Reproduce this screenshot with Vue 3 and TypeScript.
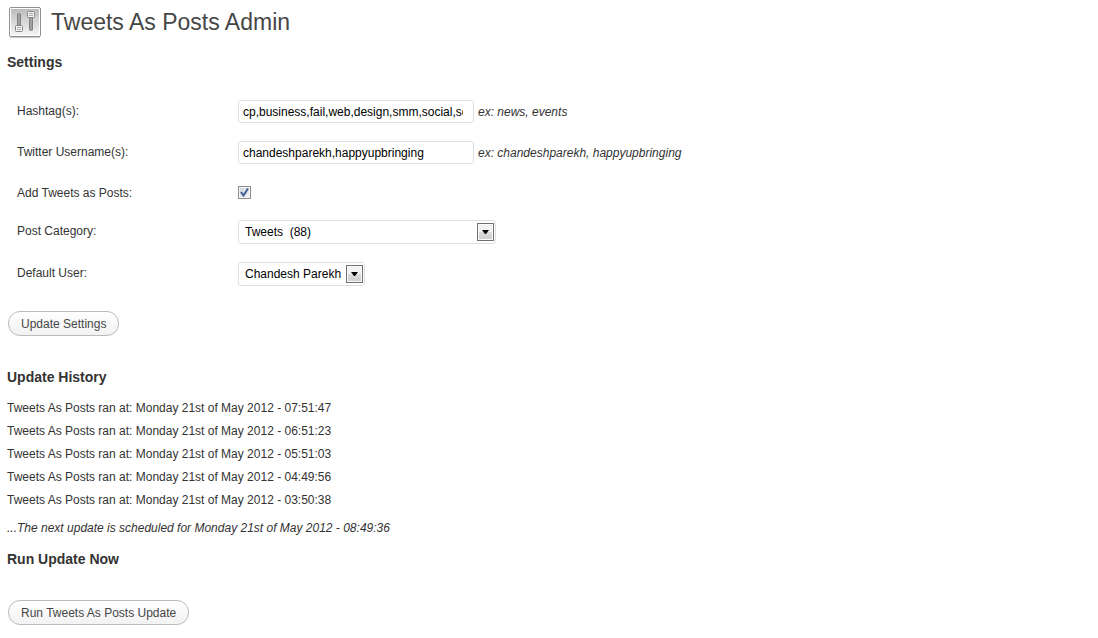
<script setup lang="ts">
import { ref } from 'vue'

const hashtags = ref('cp,business,fail,web,design,smm,social,seo,marketing')
const usernames = ref('chandeshparekh,happyupbringing')
const addAsPosts = ref(true)
const category = ref('tweets')
const defaultUser = ref('chandesh')

const runs: string[] = ['07:51:47', '06:51:23', '05:51:03', '04:49:56', '03:50:38']
</script>

<template>
  <main class="page">
    <header class="title">
      <svg class="title-icon" width="32" height="32" viewBox="0 0 32 32" aria-hidden="true">
        <defs>
          <linearGradient id="panel" x1="0" y1="0" x2="0" y2="1">
            <stop offset="0" stop-color="#bcbcbc" />
            <stop offset="1" stop-color="#f4f4f4" />
          </linearGradient>
        </defs>
        <rect x="0.5" y="1.5" width="31" height="29" rx="1.5" fill="#fff" stroke="#909090" />
        <rect x="2" y="3" width="28" height="26" fill="url(#panel)" />
        <path d="M1 31.5H31" stroke="#c8c8c8" />
        <rect x="8.5" y="7.5" width="3" height="14" rx="1" fill="#a0a0a0" stroke="#808080" />
        <rect x="20.5" y="10.5" width="3" height="14" rx="1" fill="#a0a0a0" stroke="#808080" />
        <rect x="6.5" y="19.5" width="7" height="6" rx="1" fill="#f5f5f5" stroke="#858585" />
        <path d="M8 21.5H12M8 23.5H12" stroke="#aaa" />
        <rect x="18.5" y="5.5" width="7" height="6" rx="1" fill="#f5f5f5" stroke="#858585" />
        <path d="M20 7.5H24M20 9.5H24" stroke="#aaa" />
      </svg>
      <h1>Tweets As Posts Admin</h1>
    </header>

    <form class="settings" @submit.prevent>
      <h2>Settings</h2>
      <div class="fields">
        <div class="row">
          <label for="hashtags">Hashtag(s):</label>
          <div class="control">
            <input id="hashtags" v-model="hashtags" class="text" type="text" />
            <em>ex: news, events</em>
          </div>
        </div>
        <div class="row">
          <label for="usernames">Twitter Username(s):</label>
          <div class="control">
            <input id="usernames" v-model="usernames" class="text" type="text" />
            <em>ex: chandeshparekh, happyupbringing</em>
          </div>
        </div>
        <div class="row tick-row">
          <label for="add-posts">Add Tweets as Posts:</label>
          <div class="control">
            <span class="tick">
              <input id="add-posts" v-model="addAsPosts" type="checkbox" />
              <svg v-if="addAsPosts" width="13" height="13" viewBox="0 0 13 13" aria-hidden="true">
                <path d="M3 6L5.5 9.5L10 2.5" fill="none" stroke="#43609c" stroke-width="2" />
              </svg>
            </span>
          </div>
        </div>
        <div class="row">
          <label for="category">Post Category:</label>
          <div class="control">
            <span class="picker wide">
              <select id="category" v-model="category">
                <option value="tweets">Tweets&nbsp;&nbsp;(88)</option>
              </select>
              <span class="arrow" aria-hidden="true">
                <svg width="7" height="4" viewBox="0 0 7 4"><path d="M0 0H7L4 4H3Z" /></svg>
              </span>
            </span>
          </div>
        </div>
        <div class="row">
          <label for="default-user">Default User:</label>
          <div class="control">
            <span class="picker">
              <select id="default-user" v-model="defaultUser">
                <option value="chandesh">Chandesh Parekh</option>
              </select>
              <span class="arrow" aria-hidden="true">
                <svg width="7" height="4" viewBox="0 0 7 4"><path d="M0 0H7L4 4H3Z" /></svg>
              </span>
            </span>
          </div>
        </div>
      </div>
      <button type="submit">Update Settings</button>
    </form>

    <section class="history">
      <h2>Update History</h2>
      <ul>
        <li v-for="time in runs" :key="time">
          Tweets As Posts ran at: Monday 21st of May 2012 - {{ time }}
        </li>
      </ul>
      <p>...The next update is scheduled for Monday 21st of May 2012 - 08:49:36</p>
    </section>

    <section class="run">
      <h2>Run Update Now</h2>
      <button type="button">Run Tweets As Posts Update</button>
    </section>
  </main>
</template>

<style>
body {
  margin: 0;
  background: #fff;
}
</style>

<style scoped>
.page {
  padding: 6px 7px 12px;
  font-family: "Liberation Sans", Arial, sans-serif;
  font-size: 12px;
  line-height: 16px;
  color: #333;
}
.title {
  display: flex;
  align-items: center;
  gap: 10px;
  padding-left: 2px;
}
.title-icon {
  flex: none;
}
h1 {
  margin: 0;
  font-size: 23px;
  font-weight: 400;
  line-height: 32px;
  color: #464646;
}
h2 {
  margin: 0;
  font-size: 14px;
  font-weight: 700;
  line-height: 20px;
}
.settings {
  padding-top: 14px;
}
.fields {
  padding: 19px 0 16px 10px;
}
.row {
  display: flex;
  align-items: center;
  padding: 9px 0;
}
.row > label {
  flex: none;
  width: 221px;
  padding-bottom: 2px;
}
.tick-row {
  padding: 10px 0;
}
.tick-row > label {
  padding: 2px 0 0;
}
.control {
  display: flex;
  align-items: center;
  gap: 4px;
}
.text {
  box-sizing: border-box;
  width: 236px;
  height: 23px;
  padding: 3px 10px 3px 4px;
  border: 1px solid #dfdfdf;
  border-radius: 3px;
  background: #fff;
  font: inherit;
  color: #000;
}
.tick {
  display: grid;
}
.tick > * {
  grid-area: 1 / 1;
}
.tick input {
  appearance: none;
  box-sizing: border-box;
  width: 13px;
  height: 13px;
  margin: 0;
  border: 1px solid #8e8f8f;
  background: linear-gradient(135deg, #cfd3da, #f6f6f6);
  box-shadow: inset 0 0 0 1px #f4f4f4;
}
.tick svg {
  pointer-events: none;
}
.picker {
  display: inline-grid;
  align-items: center;
}
.picker > * {
  grid-area: 1 / 1;
}
.picker select {
  appearance: none;
  box-sizing: border-box;
  width: 100%;
  height: 24px;
  padding: 2px 22px 2px 6px;
  border: 1px solid #dfdfdf;
  border-radius: 3px;
  background: #fff;
  font: inherit;
  color: #000;
}
.wide {
  width: 258px;
}
.arrow {
  display: grid;
  place-items: center;
  justify-self: end;
  box-sizing: border-box;
  width: 17px;
  height: 18px;
  margin-right: 2px;
  border: 1px solid #707070;
  background: linear-gradient(#f2f2f2 50%, #dcdcdc 50%, #cfcfcf);
  box-shadow: inset 0 0 0 1px #fafafa;
  pointer-events: none;
}
button {
  display: block;
  box-sizing: border-box;
  height: 25px;
  margin-left: 1px;
  padding: 3px 12px;
  border: 1px solid #bbb;
  border-radius: 12px;
  background: linear-gradient(#fff, #f2f2f2);
  font: inherit;
  color: #464646;
  cursor: pointer;
}
.history {
  padding-top: 31px;
}
ul {
  margin: 0;
  padding: 10px 0 0;
  list-style: none;
}
li {
  line-height: 23px;
}
p {
  margin: 8px 0 0;
  font-style: italic;
}
.run {
  padding-top: 13px;
}
.run h2 {
  margin-bottom: 31px;
}
</style>
